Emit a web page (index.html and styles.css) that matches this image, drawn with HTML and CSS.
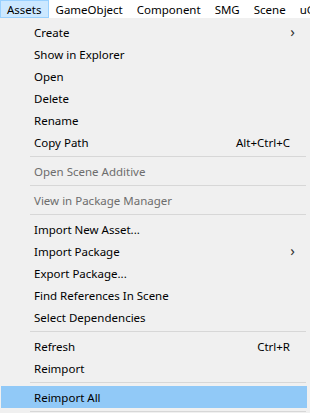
FILE: index.html
```html
<!DOCTYPE html>
<html>
<head>
<meta charset="utf-8">
<link rel="stylesheet" href="styles.css">
</head>
<body>
<div class="menubar">
  <span class="top active">Assets</span>
  <span class="top">GameObject</span>
  <span class="top">Component</span>
  <span class="top">SMG</span>
  <span class="top">Scene</span>
  <span class="top">uGUI</span>
</div>
<div class="menu">
  <div class="item"><span class="label">Create</span><span class="arrow">›</span></div>
  <div class="item"><span class="label">Show in Explorer</span></div>
  <div class="item"><span class="label">Open</span></div>
  <div class="item"><span class="label">Delete</span></div>
  <div class="item"><span class="label">Rename</span></div>
  <div class="item"><span class="label">Copy Path</span><span class="key">Alt+Ctrl+C</span></div>
  <div class="sep"></div>
  <div class="item disabled"><span class="label">Open Scene Additive</span></div>
  <div class="sep"></div>
  <div class="item disabled"><span class="label">View in Package Manager</span></div>
  <div class="sep"></div>
  <div class="item"><span class="label">Import New Asset...</span></div>
  <div class="item"><span class="label">Import Package</span><span class="arrow">›</span></div>
  <div class="item"><span class="label">Export Package...</span></div>
  <div class="item"><span class="label">Find References In Scene</span></div>
  <div class="item"><span class="label">Select Dependencies</span></div>
  <div class="sep"></div>
  <div class="item"><span class="label">Refresh</span><span class="key">Ctrl+R</span></div>
  <div class="item"><span class="label">Reimport</span></div>
  <div class="sep"></div>
  <div class="item hover"><span class="label">Reimport All</span></div>
  <div class="sep"></div>
</div>
</body>
</html>
```
FILE: styles.css
```css
html, body {
  margin: 0;
  padding: 0;
  background: #f0f0f0;
  overflow: hidden;
}
body {
  width: 310px;
  height: 413px;
  font-family: "Noto Sans", "Open Sans", sans-serif;
  font-size: 11.5px;
  color: #000;
}
.menubar {
  height: 19px;
  background: #fff;
  display: flex;
  white-space: nowrap;
  overflow: hidden;
  border-bottom: 1px solid #f0f0f0;
  box-sizing: border-box;
}
.top {
  padding: 0 6px;
  height: 18px;
  box-sizing: border-box;
  border: 1px solid transparent;
  display: flex;
  align-items: center;
  flex-shrink: 0;
}
.active {
  background: #cce8ff;
  border-color: #99d1ff;
}
.menu {
  padding-top: 2px;
  width: 308px;
  background: #f0f0f0;
}
.item {
  height: 22px;
  display: flex;
  align-items: center;
  padding-left: 33px;
  padding-right: 14px;
  margin: 0 1px;
}
.label {
  flex: 1;
}
.key {
  margin-right: 3px;
}
.arrow {
  font-size: 15px;
  line-height: 1;
  color: #333;
  margin-right: -2px;
  margin-top: -2px;
}
.disabled {
  color: #6d6d6d;
}
.hover {
  background: #91c9f7;
}
.sep {
  height: 7px;
  display: flex;
  align-items: center;
  margin-left: 30px;
  margin-right: 2px;
}
.sep::before {
  content: "";
  flex: 1;
  height: 1px;
  background: #d7d7d7;
}
```
